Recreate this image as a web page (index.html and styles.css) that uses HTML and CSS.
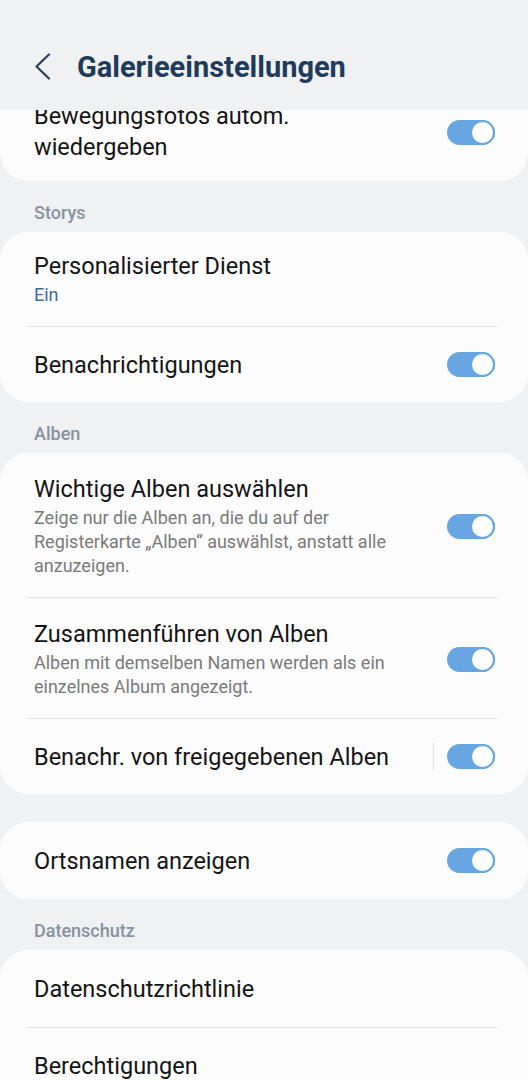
FILE: index.html
```html
<!DOCTYPE html>
<html lang="de">
<head>
<meta charset="utf-8">
<link rel="stylesheet" href="styles.css">
</head>
<body>
<div class="page">
  <header class="header">
    <svg class="back" width="20" height="30" viewBox="0 0 20 30"><path d="M15 2.5 L2.5 14.5 L15 26.5" fill="none" stroke="#2b4058" stroke-width="2.2" stroke-linecap="round" stroke-linejoin="round"/></svg>
    <h1 class="title">Galerieeinstellungen</h1>
  </header>
  <main class="scroll">
    <div class="list">
      <section class="card first">
        <div class="row first-row">
          <div class="text"><div class="name two">Bewegungsfotos autom. wiedergeben</div></div>
          <span class="toggle"></span>
        </div>
      </section>

      <div class="label">Storys</div>
      <section class="card">
        <div class="row">
          <div class="text"><div class="name">Personalisierter Dienst</div><div class="sub">Ein</div></div>
        </div>
        <div class="divider"></div>
        <div class="row single">
          <div class="text"><div class="name">Benachrichtigungen</div></div>
          <span class="toggle"></span>
        </div>
      </section>

      <div class="label">Alben</div>
      <section class="card">
        <div class="row desc-row">
          <div class="text"><div class="name">Wichtige Alben auswählen</div><div class="desc">Zeige nur die Alben an, die du auf der Registerkarte „Alben“ auswählst, anstatt alle anzuzeigen.</div></div>
          <span class="toggle"></span>
        </div>
        <div class="divider"></div>
        <div class="row desc-row">
          <div class="text"><div class="name">Zusammenführen von Alben</div><div class="desc">Alben mit demselben Namen werden als ein einzelnes Album angezeigt.</div></div>
          <span class="toggle"></span>
        </div>
        <div class="divider"></div>
        <div class="row single">
          <div class="text"><div class="name">Benachr. von freigegebenen Alben</div></div>
          <span class="vsep"></span>
          <span class="toggle"></span>
        </div>
      </section>

      <section class="card spaced">
        <div class="row single">
          <div class="text"><div class="name">Ortsnamen anzeigen</div></div>
          <span class="toggle"></span>
        </div>
      </section>

      <div class="label">Datenschutz</div>
      <section class="card">
        <div class="row single">
          <div class="text"><div class="name">Datenschutzrichtlinie</div></div>
        </div>
        <div class="divider"></div>
        <div class="row single">
          <div class="text"><div class="name">Berechtigungen</div></div>
        </div>
      </section>
    </div>
  </main>
</div>
</body>
</html>
```

FILE: styles.css
```css
* { box-sizing: border-box; }
html, body { margin: 0; padding: 0; }
body {
  background: #f0f1f3;
  font-family: "Roboto", "Noto Sans", sans-serif;
  color: #141414;
}
.page {
  width: 528px;
  height: 1080px;
  display: flex;
  flex-direction: column;
  overflow: hidden;
}
.header {
  height: 110px;
  flex: none;
  display: flex;
  align-items: center;
  padding: 24px 0 0 34px;
  gap: 23px;
}
.back { display: block; margin-top: 0; }
.title {
  margin: 0;
  font-size: 29px;
  font-weight: 700;
  color: #1f3b5c;
  letter-spacing: 0;
}
.scroll {
  flex: 1;
  overflow: hidden;
}
.list {
  display: flex;
  flex-direction: column;
  margin-top: -28px;
}
.card {
  background: #fcfcfc;
  border-radius: 28px;
  display: flex;
  flex-direction: column;
}
.card.spaced { margin-top: 28px; }
.label {
  padding: 22px 34px 9px;
  font-size: 18px;
  line-height: 20px;
  font-weight: 500;
  color: #8593a2;
}
.row {
  display: flex;
  align-items: center;
  padding: 19px 33px 19px 34px;
  gap: 13px;
}
.row.first-row { padding-bottom: 18px; }
.row.single { min-height: 75px; }
.card > .row.single:first-child { min-height: 77px; }
.row.desc-row { padding-top: 21px; padding-bottom: 19px; }
.text { flex: 1; min-width: 0; }
.name {
  font-size: 23.5px;
  line-height: 30px;
  color: #141414;
}
.name.two { line-height: 31px; width: 300px; }
.sub {
  margin-top: 2px;
  font-size: 18px;
  line-height: 24px;
  color: #3b6c9e;
}
.desc {
  margin-top: 2px;
  font-size: 18px;
  line-height: 24px;
  color: #7a7a7a;
  padding-right: 30px;
}
.divider {
  height: 1px;
  background: #e2e3e5;
  margin: 0 31px 0 27px;
}
.vsep {
  width: 1px;
  height: 28px;
  background: #dcdfe3;
  flex: none;
}
.toggle {
  flex: none;
  width: 48px;
  height: 25px;
  border-radius: 13px;
  background: #68a6e3;
  position: relative;
}
.toggle::after {
  content: "";
  position: absolute;
  right: 0;
  top: 0;
  width: 25px;
  height: 25px;
  border-radius: 50%;
  background: #fff;
  border: 2.5px solid #68a6e3;
  box-sizing: border-box;
}
```
